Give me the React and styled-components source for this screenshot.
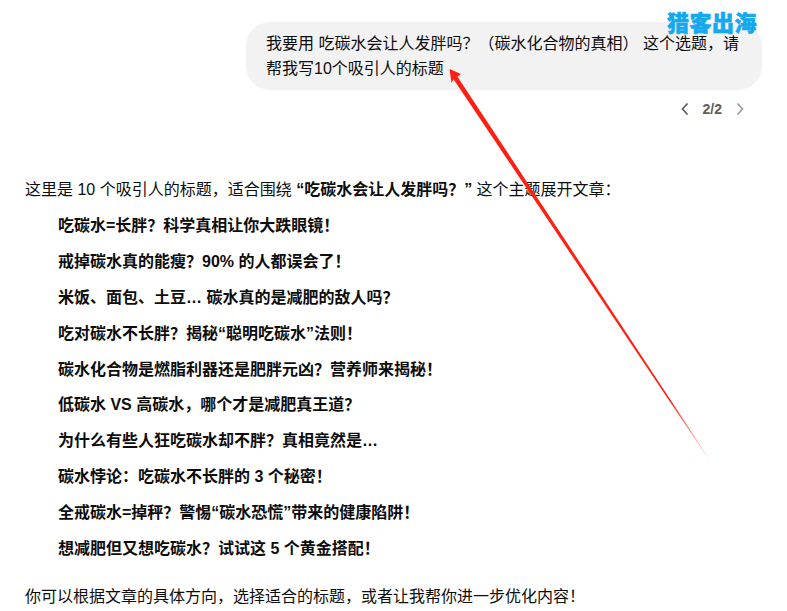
import React from "react";
import styled, { createGlobalStyle } from "styled-components";

const GlobalStyle = createGlobalStyle`
  html, body {
    margin: 0;
    padding: 0;
    background: #fff;
  }
  body {
    font-family: "Liberation Sans", "Noto Sans CJK SC", sans-serif;
    color: #0d0d0d;
    font-size: 16px;
  }
`;

const Page = styled.div`
  position: relative;
  width: 787px;
  height: 611px;
  overflow: hidden;
  padding: 22px 25px 0 25px;
  box-sizing: border-box;
`;

const UserRow = styled.div`
  display: flex;
  justify-content: flex-end;
`;

const Bubble = styled.div`
  width: 516px;
  box-sizing: border-box;
  padding: 9px 20px 9px 20px;
  background: #f2f2f2;
  border-radius: 24px;
  line-height: 25px;
`;

const Pager = styled.div`
  display: flex;
  justify-content: flex-end;
  align-items: center;
  gap: 11px;
  height: 24px;
  margin-top: 7px;
  padding-right: 15px;
  font-size: 14px;
  font-weight: 700;
  color: #5d5d5d;
`;

const Answer = styled.div`
  margin-top: 57px;
`;

const Line = styled.p`
  margin: 0;
  line-height: 24px;
`;

const Titles = styled.ol`
  list-style: none;
  margin: 12px 0 0 0;
  padding: 0 0 0 33px;
  display: flex;
  flex-direction: column;
  gap: 11.9px;
`;

const Title = styled.li`
  line-height: 24px;
  font-weight: 700;
`;

const Closing = styled(Line)`
  margin-top: 24px;
`;

const Logo = styled.div`
  position: absolute;
  top: 7px;
  left: 667px;
  font-size: 22px;
  line-height: 28px;
  font-weight: 900;
  letter-spacing: 0.5px;
  color: #12a9ee;
  -webkit-text-stroke: 0.6px #12a9ee;
  font-family: "Noto Sans CJK SC", sans-serif;
`;

const ArrowLayer = styled.svg`
  position: absolute;
  left: 0;
  top: 0;
  pointer-events: none;
`;

const Chevron = ({ dir, color }) => (
  <svg width="14" height="14" viewBox="0 0 14 14" fill="none">
    <path
      d={dir === "left" ? "M9.5 1.5 L4.5 7 L9.5 12.5" : "M4.5 1.5 L9.5 7 L4.5 12.5"}
      stroke={color}
      strokeWidth="1.7"
    />
  </svg>
);

const TITLES = [
  "吃碳水=长胖？科学真相让你大跌眼镜！",
  "戒掉碳水真的能瘦？90% 的人都误会了！",
  "米饭、面包、土豆… 碳水真的是减肥的敌人吗？",
  "吃对碳水不长胖？揭秘“聪明吃碳水”法则！",
  "碳水化合物是燃脂利器还是肥胖元凶？营养师来揭秘！",
  "低碳水 VS 高碳水，哪个才是减肥真王道？",
  "为什么有些人狂吃碳水却不胖？真相竟然是…",
  "碳水悖论：吃碳水不长胖的 3 个秘密！",
  "全戒碳水=掉秤？警惕“碳水恐慌”带来的健康陷阱！",
  "想减肥但又想吃碳水？试试这 5 个黄金搭配！",
];

export default function App() {
  return (
    <Page>
      <GlobalStyle />
      <UserRow>
        <Bubble>
          我要用 吃碳水会让人发胖吗？（碳水化合物的真相） 这个选题，请帮我写10个吸引人的标题
        </Bubble>
      </UserRow>
      <Pager>
        <Chevron dir="left" color="#5d5d5d" />
        <span>2/2</span>
        <Chevron dir="right" color="#9b9b9b" />
      </Pager>
      <Answer>
        <Line>
          这里是 10 个吸引人的标题，适合围绕 <b>“吃碳水会让人发胖吗？”</b> 这个主题展开文章：
        </Line>
        <Titles>
          {TITLES.map((t) => (
            <Title key={t}>{t}</Title>
          ))}
        </Titles>
        <Closing>你可以根据文章的具体方向，选择适合的标题，或者让我帮你进一步优化内容！</Closing>
      </Answer>
      <Logo>猎客出海</Logo>
      <ArrowLayer width="787" height="611" viewBox="0 0 787 611">
        <defs>
          <linearGradient id="tail" gradientUnits="userSpaceOnUse" x1="450" y1="69" x2="708" y2="458">
            <stop offset="0" stopColor="#ff2014" />
            <stop offset="0.85" stopColor="#ff2014" />
            <stop offset="1" stopColor="#ff2014" stopOpacity="0.05" />
          </linearGradient>
        </defs>
        <path
          d="M449.5 69 L461 74 L457.5 76.7 L709 458.2 L708.2 458.8 L453.5 79.3 L451.5 83 Z"
          fill="url(#tail)"
        />
      </ArrowLayer>
    </Page>
  );
}
